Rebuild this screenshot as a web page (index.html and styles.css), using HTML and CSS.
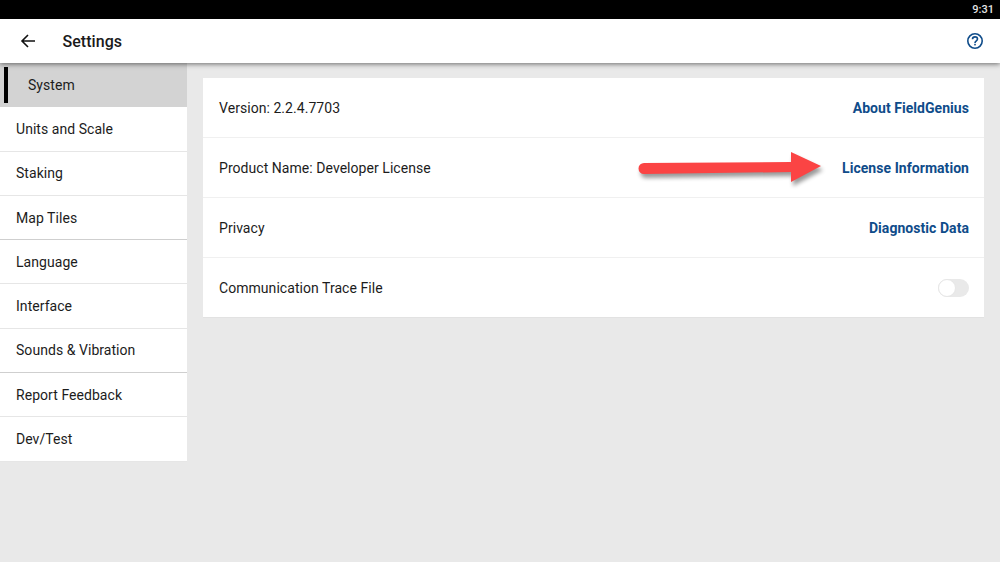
FILE: index.html
```html
<!DOCTYPE html>
<html lang="en">
<head>
  <meta charset="UTF-8" />
  <meta name="viewport" content="width=device-width, initial-scale=1.0"/>
  <title>Settings</title>
  <link rel="stylesheet" href="styles.css">
</head>
<body>
  <div class="status-bar">9:31</div>

  <header class="app-bar">
    <svg class="back-icon" width="16" height="16" viewBox="0 0 16 16">
      <path d="M15 8H2M8 2L2 8l6 6" fill="none" stroke="#111" stroke-width="1.6"/>
    </svg>
    <h1>Settings</h1>
    <svg class="help-icon" width="18" height="18" viewBox="0 0 18 18">
      <circle cx="9" cy="9" r="7.200" fill="none" stroke="#0f4c8a" stroke-width="1.6"/>
      <path d="M6.500 7.200C6.500 5.800 7.600 4.900 9 4.900s2.500.9 2.500 2.200c0 1.700-2.500 1.800-2.500 3.800" fill="none" stroke="#0f4c8a" stroke-width="1.6"/>
      <rect x="8.200" y="11.800" width="1.600" height="1.600" fill="#0f4c8a"/>
    </svg>
  </header>

  <div class="layout">
    <nav class="sidebar">
      <div class="nav-item active">System</div>
      <div class="nav-item">Units and Scale</div>
      <div class="nav-item">Staking</div>
      <div class="nav-item strong">Map Tiles</div>
      <div class="nav-item">Language</div>
      <div class="nav-item">Interface</div>
      <div class="nav-item strong">Sounds &amp; Vibration</div>
      <div class="nav-item">Report Feedback</div>
      <div class="nav-item">Dev/Test</div>
    </nav>

    <main class="content">
      <section class="card">
        <div class="row">
          <span>Version: 2.2.4.7703</span>
          <a class="link">About FieldGenius</a>
        </div>
        <div class="row">
          <span>Product Name: Developer License</span>
          <a class="link">License Information</a>
        </div>
        <div class="row">
          <span>Privacy</span>
          <a class="link">Diagnostic Data</a>
        </div>
        <div class="row">
          <span>Communication Trace File</span>
          <span class="switch"><span class="knob"></span></span>
        </div>
      </section>
    </main>
  </div>

  <svg class="arrow" width="200" height="50" viewBox="0 0 200 50">
    <path class="arrow-shadow" d="M14 20L161 19V9l30 14-30 16V29L14 31a5.500 5.500 0 0 1 0-11z" fill="#000" opacity="0.4" transform="translate(2 4)"/>
    <path d="M14 20L161 19V9l30 14-30 16V29L14 31a5.500 5.500 0 0 1 0-11z" fill="#fb4444"/>
  </svg>
</body>
</html>
```
FILE: styles.css
```css
* {
  box-sizing: border-box;
}

html, body {
  height: 100%;
}

body {
  margin: 0;
  display: flex;
  flex-direction: column;
  overflow: hidden;
  font-family: Roboto, sans-serif;
  font-size: 14px;
  letter-spacing: 0.05px;
  color: #1c1c1c;
  background-color: #e9e9e9;
}

.status-bar {
  height: 19px;
  padding-right: 6px;
  background: #000;
  color: #e4e4e4;
  font-size: 11px;
  font-weight: 500;
  line-height: 19px;
  text-align: right;
}

.app-bar {
  position: relative;
  z-index: 1;
  display: flex;
  align-items: center;
  height: 44px;
  padding: 0 16px 0 20px;
  background: #fff;
  box-shadow: 0 1px 5px rgba(0, 0, 0, 0.55);
}

.app-bar h1 {
  flex: 1;
  margin: 0 0 0 26.5px;
  font-size: 16px;
  font-weight: 500;
  color: #1a1a1a;
}

.layout {
  flex: 1;
  display: flex;
  align-items: flex-start;
}

.sidebar {
  width: 187px;
  background: #fff;
}

.nav-item {
  display: flex;
  align-items: center;
  height: 44.3px;
  padding-left: 16px;
  border-bottom: 1px solid #e6e6e6;
}

.nav-item.strong {
  border-bottom-color: #cfcfcf;
}

.nav-item.active {
  position: relative;
  padding-left: 28px;
  background: #d3d3d3;
  border-bottom: none;
}

.nav-item.active::before {
  content: "";
  position: absolute;
  left: 4px;
  top: 4px;
  bottom: 4px;
  width: 4px;
  background: #000;
}

.content {
  flex: 1;
  padding: 15px 16px 0;
}

.card {
  background: #fff;
  border-bottom: 1px solid #e2e2e2;
}

.row {
  display: flex;
  justify-content: space-between;
  align-items: center;
  height: 60px;
  padding: 0 15px 0 16px;
  border-bottom: 1px solid #f0f0f0;
}

.row:last-child {
  height: 59px;
  padding-top: 1px;
  border-bottom: none;
}

.link {
  font-weight: 700;
  color: #0f4c8a;
}

.switch {
  display: block;
  width: 31px;
  height: 18px;
  border-radius: 9px;
  background: #e9e9e9;
}

.knob {
  display: block;
  width: 18px;
  height: 18px;
  border-radius: 50%;
  background: #fff;
  border: 1px solid #e6e6e6;
}

/* annotation drawn on top of the screenshot */
.arrow {
  position: absolute;
  left: 630px;
  top: 143px;
}

.arrow-shadow {
  filter: blur(2px);
}
```
